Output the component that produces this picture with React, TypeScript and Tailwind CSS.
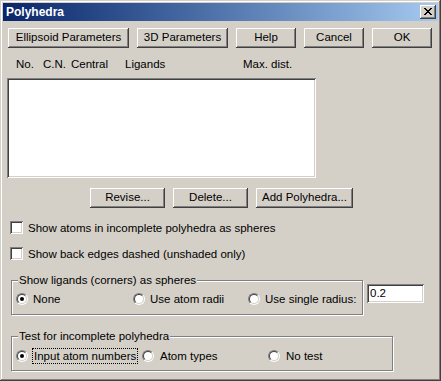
import React from 'react';

const raised =
  'shadow-[inset_-1px_-1px_0_#404040,inset_1px_1px_0_#ffffff,inset_-2px_-2px_0_#808080]';
const sunken =
  'shadow-[inset_1px_1px_0_#808080,inset_-1px_-1px_0_#ffffff,inset_2px_2px_0_#404040,inset_-2px_-2px_0_#d4d0c8]';

const Button: React.FC<{ label: string; w: string }> = ({ label, w }) => (
  <div className={`h-[20px] ${w} bg-[#d4d0c8] ${raised} flex items-center justify-center`}>
    {label}
  </div>
);

const Radio: React.FC<{ checked?: boolean }> = ({ checked }) => (
  <span className="w-[12px] h-[12px] shrink-0 rounded-full border border-t-[#808080] border-l-[#808080] border-b-white border-r-white">
    <span className="w-full h-full rounded-full border border-t-[#404040] border-l-[#404040] border-b-[#d4d0c8] border-r-[#d4d0c8] bg-white flex items-center justify-center">
      {checked && <span className="w-[4px] h-[4px] rounded-full bg-black" />}
    </span>
  </span>
);

const Checkbox: React.FC<{ label: string }> = ({ label }) => (
  <div className="h-[13px] ml-[2px] flex items-center">
    <span className={`w-[13px] h-[13px] shrink-0 bg-white ${sunken}`} />
    <span className="ml-[5px] leading-[14px]">{label}</span>
  </div>
);

const App: React.FC = () => {
  return (
    <div className="w-[441px] h-[381px] bg-[#d4d0c8] p-[3px] shadow-[inset_-1px_-1px_0_#404040,inset_1px_1px_0_#d4d0c8,inset_-2px_-2px_0_#808080,inset_2px_2px_0_#ffffff] font-['Liberation_Sans',Arial,sans-serif] text-[11.5px] text-black whitespace-nowrap flex flex-col select-none">
      {/* Title bar */}
      <div className="h-[18px] bg-linear-to-r from-[#0a246a] to-[#a6caf0] flex items-center justify-between pl-[3px] pr-[2px]">
        <span className="text-white font-bold text-[12px] leading-[18px]">Polyhedra</span>
        <div className={`w-[16px] h-[14px] bg-[#d4d0c8] ${raised} flex items-center justify-center pb-[1px]`}>
          <svg width="8" height="7" viewBox="0 0 8 7" shapeRendering="crispEdges">
            <path
              fill="#000"
              d="M0 0h2v1H0zM6 0h2v1H6zM1 1h2v1H1zM5 1h2v1H5zM2 2h4v1H2zM3 3h2v1H3zM2 4h4v1H2zM1 5h2v1H1zM5 5h2v1H5zM0 6h2v1H0zM6 6h2v1H6z"
            />
          </svg>
        </div>
      </div>

      <div className="px-[5px] flex flex-col">
        {/* Top buttons */}
        <div className="mt-[7px] flex gap-[8px]">
          <Button label="Ellipsoid Parameters" w="w-[121px]" />
          <Button label="3D Parameters" w="w-[91px]" />
          <Button label="Help" w="w-[60px]" />
          <Button label="Cancel" w="w-[60px]" />
          <Button label="OK" w="w-[60px]" />
        </div>

        {/* Column headers */}
        <div className="mt-[9px] h-[14px] flex items-center pl-[8px] leading-[14px]">
          <span className="w-[27px]">No.</span>
          <span className="w-[28px]">C.N.</span>
          <span className="w-[54px]">Central</span>
          <span className="w-[118px]">Ligands</span>
          <span>Max. dist.</span>
        </div>

        {/* List */}
        <div className={`mt-[7px] ml-[-1px] w-[309px] h-[100px] bg-white ${sunken}`} />

        {/* List buttons */}
        <div className="mt-[10px] ml-[82px] flex gap-[8px]">
          <Button label="Revise..." w="w-[75px]" />
          <Button label="Delete..." w="w-[75px]" />
          <Button label="Add Polyhedra..." w="w-[97px]" />
        </div>

        <div className="mt-[13px]">
          <Checkbox label="Show atoms in incomplete polyhedra as spheres" />
        </div>
        <div className="mt-[13px]">
          <Checkbox label="Show back edges dashed (unshaded only)" />
        </div>

        {/* Ligand spheres */}
        <div className="mt-[13px] ml-[3px] flex items-start">
          <fieldset className="w-[352px] border border-[#808080] shadow-[inset_1px_1px_0_#ffffff,1px_1px_0_#ffffff] pl-[4px] pt-[5px] pb-[9px]">
            <legend className="ml-[2px] px-[1px] h-[14px] leading-[14px] bg-[#d4d0c8]">
              Show ligands (corners) as spheres
            </legend>
            <div className="h-[13px] flex items-center leading-[14px]">
              <div className="w-[117px] flex items-center gap-[5px]">
                <Radio checked />
                <span>None</span>
              </div>
              <div className="w-[115px] flex items-center gap-[5px]">
                <Radio />
                <span>Use atom radii</span>
              </div>
              <div className="flex items-center gap-[5px]">
                <Radio />
                <span>Use single radius:</span>
              </div>
            </div>
          </fieldset>
          <div className={`ml-[4px] mt-[11px] w-[57px] h-[19px] bg-white ${sunken} pl-[3px] pt-[2px] leading-[14px]`}>
            0.2
          </div>
        </div>

        {/* Incomplete test */}
        <fieldset className="mt-[14px] ml-[3px] w-[382px] border border-[#808080] shadow-[inset_1px_1px_0_#ffffff,1px_1px_0_#ffffff] pl-[4px] pt-[6px] pb-[8px]">
          <legend className="ml-[2px] px-[1px] h-[14px] leading-[14px] bg-[#d4d0c8]">
            Test for incomplete polyhedra
          </legend>
          <div className="h-[13px] flex items-center leading-[14px]">
            <div className="w-[126px] shrink-0 flex items-center">
              <Radio checked />
              <span className="ml-[4px] px-[1px] h-[16px] leading-[14px] border border-dotted border-black">
                Input atom numbers
              </span>
            </div>
            <div className="w-[126px] shrink-0 flex items-center gap-[6px]">
              <Radio />
              <span>Atom types</span>
            </div>
            <div className="flex items-center gap-[6px]">
              <Radio />
              <span>No test</span>
            </div>
          </div>
        </fieldset>
      </div>
    </div>
  );
};

export default App;
